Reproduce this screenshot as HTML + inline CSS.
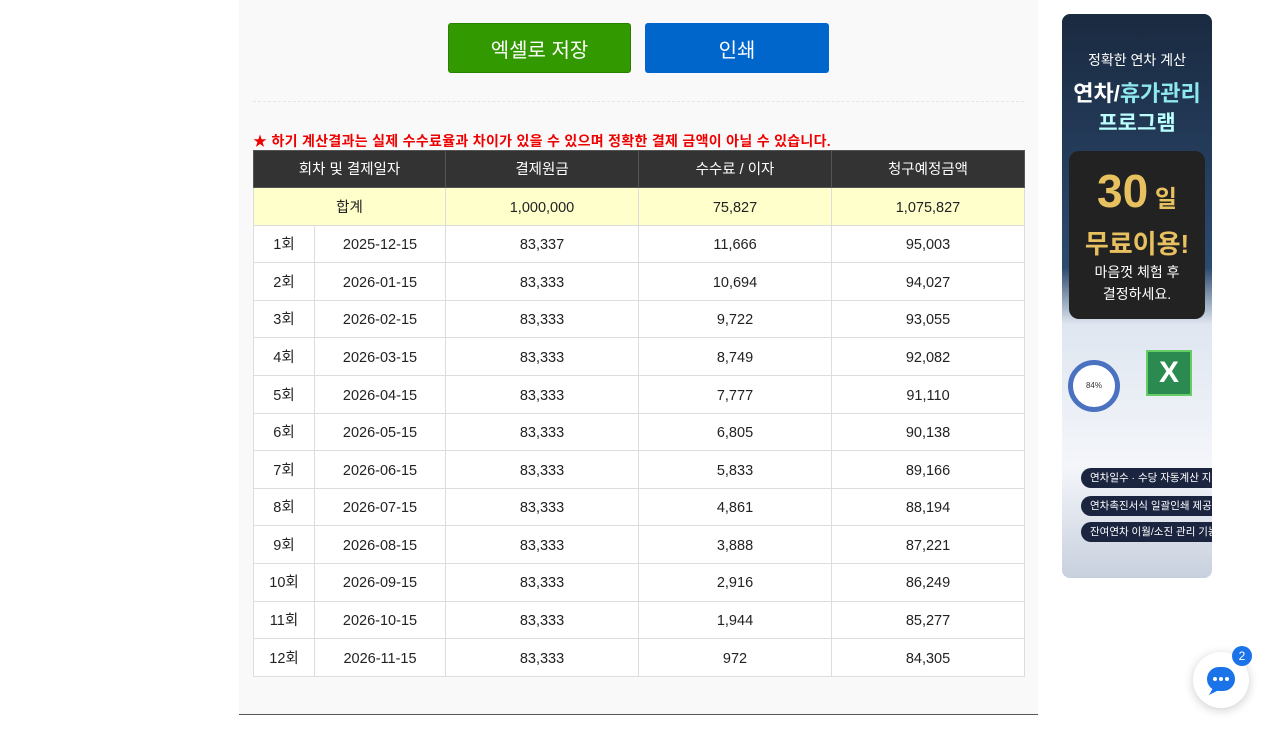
<!DOCTYPE html><html><head><meta charset="utf-8"><style>
body{margin:0;width:1280px;height:734px;background:#fff;font-family:"Liberation Sans","Noto Sans CJK KR",sans-serif;position:relative;overflow:hidden}
.panel{position:absolute;left:239px;top:0;width:799px;height:714px;background:#f9f9f9;border-bottom:1px solid #555}
.btn{position:absolute;top:23px;height:50px;width:183px;box-sizing:border-box;border-radius:3px;color:#fff;font-size:20px;display:flex;align-items:center;justify-content:center}
.hr{position:absolute;left:253px;top:101px;width:771px;border-top:1px dashed #e6e6e6}
.note{position:absolute;left:253px;top:131px;font-size:14px;font-weight:bold;color:#e00;white-space:nowrap;letter-spacing:0.3px}
table{position:absolute;left:253px;top:150px;border-collapse:collapse;width:771px;table-layout:fixed;font-size:14.5px;color:#222}
td,th{border:1px solid #ddd;text-align:center;padding:3px 0 0 0;height:33.6px;background:#fff;vertical-align:middle;line-height:1}
th{background:#333;color:#fff;font-weight:normal;height:33px;border-color:#555}
tr.sum td{background:#ffffcc}
.ad{position:absolute;left:1062px;top:14px;width:150px;height:564px;border-radius:8px;overflow:hidden;background:linear-gradient(#1a2a40,#2c4a70 45%,#dfe6f0 55%,#f4f6fa 80%,#c8d0de)}
.ad div{position:absolute;width:100%;text-align:center;color:#fff}
.ad .box{left:7px;top:137px;width:136px;height:168px;border-radius:10px;background:#222;}
.ad .pill{left:19px;width:140px;height:20px;border-radius:10px;background:#1b2540;font-size:10.5px;line-height:20px;text-align:left;padding-left:9px;white-space:nowrap}
.chat{position:absolute;left:1193px;top:652px;width:56px;height:56px;border-radius:50%;background:#fff;box-shadow:0 2px 10px rgba(0,0,0,.2)}
</style></head><body>
<div class="panel"></div>
<div class="btn" style="left:448px;background:#339900;border:1px solid #2a8000">엑셀로 저장</div>
<div class="btn" style="left:645px;background:#0066cc;width:184px">인쇄</div>
<div class="hr"></div>
<div class="note">★ 하기 계산결과는 실제 수수료율과 차이가 있을 수 있으며 정확한 결제 금액이 아닐 수 있습니다.</div>
<table>
<colgroup><col style="width:61px"><col style="width:131px"><col style="width:193px"><col style="width:193px"><col style="width:193px"></colgroup>
<tr><th colspan="2">회차 및 결제일자</th><th>결제원금</th><th>수수료 / 이자</th><th>청구예정금액</th></tr>
<tr class="sum"><td colspan="2">합계</td><td>1,000,000</td><td>75,827</td><td>1,075,827</td></tr>
<tr><td>1회</td><td>2025-12-15</td><td>83,337</td><td>11,666</td><td>95,003</td></tr>
<tr><td>2회</td><td>2026-01-15</td><td>83,333</td><td>10,694</td><td>94,027</td></tr>
<tr><td>3회</td><td>2026-02-15</td><td>83,333</td><td>9,722</td><td>93,055</td></tr>
<tr><td>4회</td><td>2026-03-15</td><td>83,333</td><td>8,749</td><td>92,082</td></tr>
<tr><td>5회</td><td>2026-04-15</td><td>83,333</td><td>7,777</td><td>91,110</td></tr>
<tr><td>6회</td><td>2026-05-15</td><td>83,333</td><td>6,805</td><td>90,138</td></tr>
<tr><td>7회</td><td>2026-06-15</td><td>83,333</td><td>5,833</td><td>89,166</td></tr>
<tr><td>8회</td><td>2026-07-15</td><td>83,333</td><td>4,861</td><td>88,194</td></tr>
<tr><td>9회</td><td>2026-08-15</td><td>83,333</td><td>3,888</td><td>87,221</td></tr>
<tr><td>10회</td><td>2026-09-15</td><td>83,333</td><td>2,916</td><td>86,249</td></tr>
<tr><td>11회</td><td>2026-10-15</td><td>83,333</td><td>1,944</td><td>85,277</td></tr>
<tr><td>12회</td><td>2026-11-15</td><td>83,333</td><td>972</td><td>84,305</td></tr>
</table>
<div class="ad">
<div style="top:36px;font-size:14px">정확한 연차 계산</div>
<div style="top:62px;font-size:22px;font-weight:bold">연차/<span style="color:#8ee8f0">휴가관리</span></div>
<div style="top:93px;font-size:21px;font-weight:bold;color:#bff">프로그램</div>
<div class="box"></div>
<div style="top:150px;font-size:46px;font-weight:bold;color:#e7c060">30<span style="font-size:24px"> 일</span></div>
<div style="top:210px;font-size:26px;font-weight:bold;color:#e7c060">무료이용!</div>
<div style="top:248px;font-size:14px">마음껏 체험 후</div>
<div style="top:270px;font-size:14px">결정하세요.</div>
<div style="left:84px;top:336px;width:42px;height:42px;background:#2a8a50;border:2px solid #6c6;font-size:30px;font-weight:bold;line-height:42px">X</div>
<div style="left:6px;top:346px;width:42px;height:42px;border-radius:50%;border:5px solid #4a72c0;background:#fff;color:#333;font-size:8px;line-height:42px">84%</div>
<div class="pill" style="top:454px">연차일수 · 수당 자동계산 지원</div>
<div class="pill" style="top:482px">연차촉진서식 일괄인쇄 제공</div>
<div class="pill" style="top:508px">잔여연차 이월/소진 관리 기능</div>
</div>
<div class="chat"><svg width="56" height="56"><rect x="14" y="15" width="28" height="24" rx="12" fill="#1a73e8"/><path d="M20 36 L16 43 L26 38Z" fill="#1a73e8"/><circle cx="22" cy="27" r="2" fill="#fff"/><circle cx="28" cy="27" r="2" fill="#fff"/><circle cx="34" cy="27" r="2" fill="#fff"/></svg></div>
<div style="position:absolute;left:1232px;top:646px;width:20px;height:20px;border-radius:50%;background:#1a73e8;color:#fff;font-size:12px;text-align:center;line-height:20px">2</div>
</body></html>
